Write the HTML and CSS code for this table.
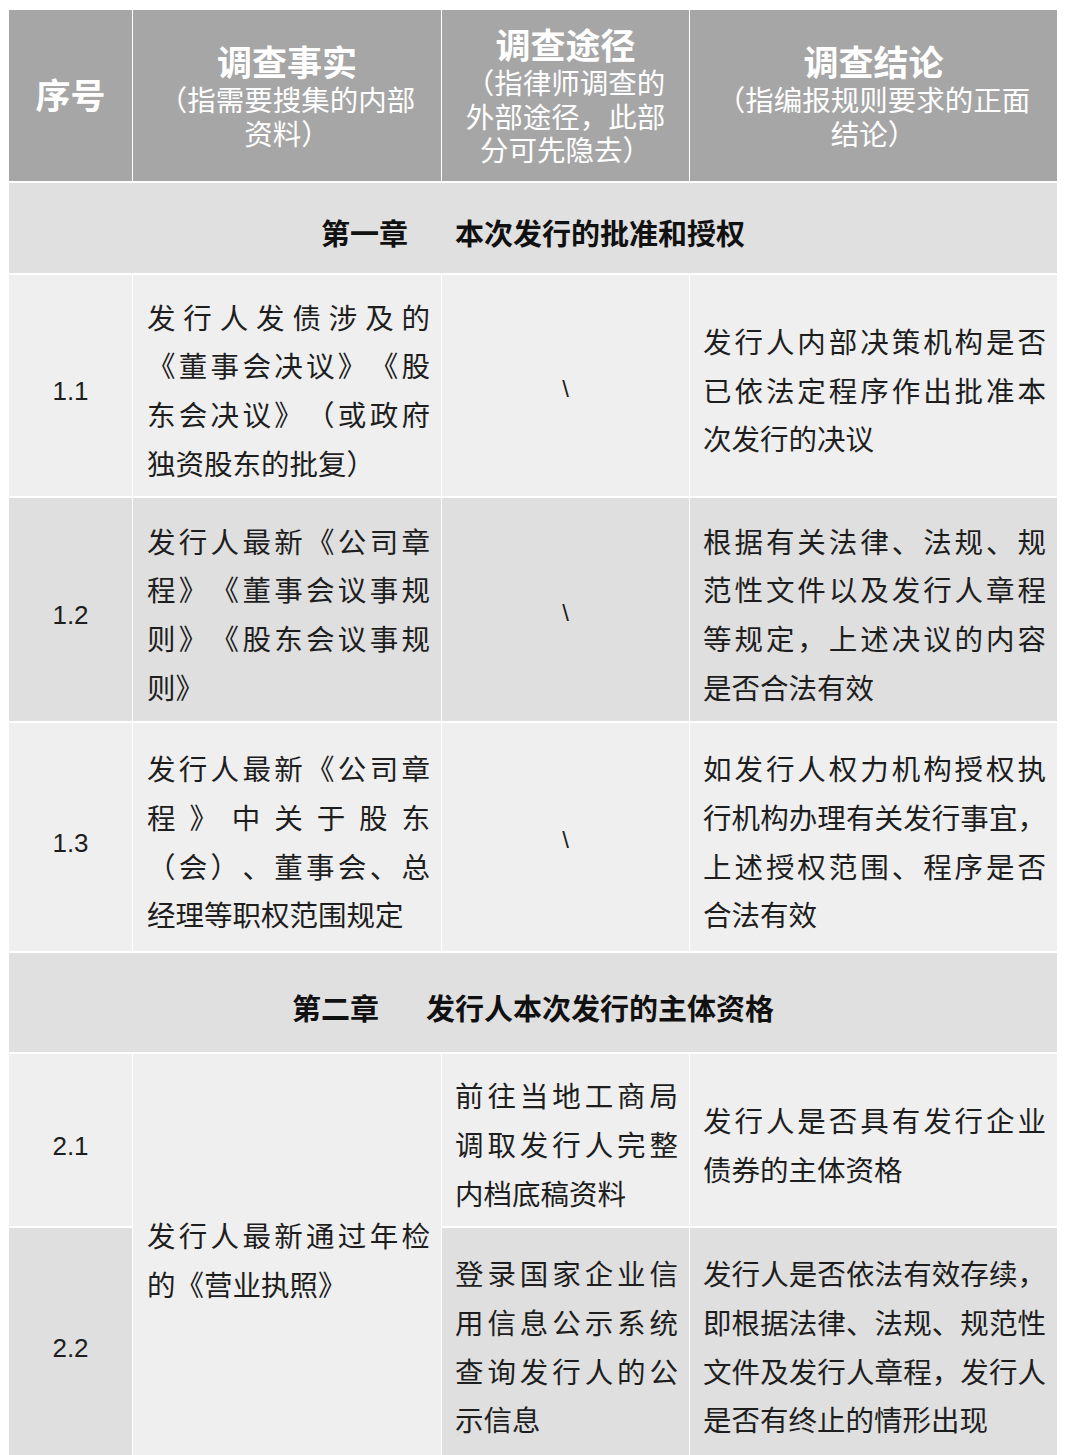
FILE: index.html
```html
<!DOCTYPE html>
<html lang="zh-CN">
<head>
<meta charset="utf-8">
<title>调查清单</title>
<link rel="stylesheet" href="styles.css">
</head>
<body>
<div class="page">
<table class="survey">
  <colgroup>
    <col class="c-no">
    <col class="c-fact">
    <col class="c-way">
    <col class="c-end">
  </colgroup>
  <thead>
    <tr class="r-head">
      <th class="h-no">序号</th>
      <th><span class="h-title">调查事实</span><span class="h-sub">（指需要搜集的内部</span><span class="h-sub">资料）</span></th>
      <th><span class="h-title">调查途径</span><span class="h-sub">（指律师调查的</span><span class="h-sub">外部途径，此部</span><span class="h-sub">分可先隐去）</span></th>
      <th><span class="h-title">调查结论</span><span class="h-sub">（指编报规则要求的正面</span><span class="h-sub">结论）</span></th>
    </tr>
  </thead>
  <tbody>
    <tr class="r-ch1">
      <td class="chapter-cell" colspan="4"><div class="chapter"><span>第一章</span><span>本次发行的批准和授权</span></div></td>
    </tr>
    <tr class="r-11 light">
      <td class="num">1.1</td>
      <td class="txt fact"><span class="ln j">发行人发债涉及的</span><span class="ln j">《董事会决议》《股</span><span class="ln j">东会决议》（或政府</span><span class="ln">独资股东的批复）</span></td>
      <td class="slash">\</td>
      <td class="txt end"><span class="ln j">发行人内部决策机构是否</span><span class="ln j">已依法定程序作出批准本</span><span class="ln">次发行的决议</span></td>
    </tr>
    <tr class="r-12 dark">
      <td class="num">1.2</td>
      <td class="txt fact"><span class="ln j">发行人最新《公司章</span><span class="ln j">程》《董事会议事规</span><span class="ln j">则》《股东会议事规</span><span class="ln">则》</span></td>
      <td class="slash">\</td>
      <td class="txt end"><span class="ln j">根据有关法律、法规、规</span><span class="ln j">范性文件以及发行人章程</span><span class="ln j">等规定，上述决议的内容</span><span class="ln">是否合法有效</span></td>
    </tr>
    <tr class="r-13 light">
      <td class="num">1.3</td>
      <td class="txt fact"><span class="ln j">发行人最新《公司章</span><span class="ln j">程》中关于股东</span><span class="ln j">（会）、董事会、总</span><span class="ln">经理等职权范围规定</span></td>
      <td class="slash">\</td>
      <td class="txt end"><span class="ln j">如发行人权力机构授权执</span><span class="ln j">行机构办理有关发行事宜，</span><span class="ln j">上述授权范围、程序是否</span><span class="ln">合法有效</span></td>
    </tr>
    <tr class="r-ch2">
      <td class="chapter-cell" colspan="4"><div class="chapter"><span>第二章</span><span>发行人本次发行的主体资格</span></div></td>
    </tr>
    <tr class="r-21 light">
      <td class="num">2.1</td>
      <td class="txt fact merged" rowspan="2"><span class="ln j">发行人最新通过年检</span><span class="ln">的《营业执照》</span></td>
      <td class="txt way"><span class="ln j">前往当地工商局</span><span class="ln j">调取发行人完整</span><span class="ln">内档底稿资料</span></td>
      <td class="txt end"><span class="ln j">发行人是否具有发行企业</span><span class="ln">债券的主体资格</span></td>
    </tr>
    <tr class="r-22 dark">
      <td class="num">2.2</td>
      <td class="txt way"><span class="ln j">登录国家企业信</span><span class="ln j">用信息公示系统</span><span class="ln j">查询发行人的公</span><span class="ln">示信息</span></td>
      <td class="txt end"><span class="ln j">发行人是否依法有效存续，</span><span class="ln j">即根据法律、法规、规范性</span><span class="ln j">文件及发行人章程，发行人</span><span class="ln">是否有终止的情形出现</span></td>
    </tr>
  </tbody>
</table>
</div>
</body>
</html>
```

FILE: styles.css
```css
html, body {
  margin: 0;
  padding: 0;
  background: #ffffff;
}

body {
  font-family: "Noto Sans CJK SC", "Noto Sans", sans-serif;
  color: #222222;
}

.page {
  padding: 8px 7px 0 8px;
}

.survey {
  border-collapse: separate;
  border-spacing: 1px 2px;
  table-layout: fixed;
  width: 1050px;
  background: #ffffff;
  text-spacing-trim: space-all;
}

.c-no { width: 123px; }
.c-fact { width: 308px; }
.c-way { width: 247px; }
.c-end { width: 367px; }

/* header */
.r-head { height: 171px; }

.r-head th {
  background: #a6a6a6;
  color: #ffffff;
  font-weight: 400;
  text-align: center;
  vertical-align: middle;
  padding: 0 4px 3px;
}

.h-no {
  font-size: 35px;
  font-weight: 700 !important;
  line-height: 44px;
}

.h-title {
  display: block;
  font-size: 35px;
  font-weight: 700;
  line-height: 43px;
}

.h-sub {
  display: block;
  font-size: 28.5px;
  line-height: 33.5px;
}

/* chapter rows */
.r-ch1 { height: 90px; }
.r-ch2 { height: 99px; }

.chapter-cell {
  background: #e0e0e0;
  padding: 8px 0 0;
  vertical-align: middle;
}

.chapter {
  display: flex;
  justify-content: center;
  gap: 47px;
  font-size: 29px;
  font-weight: 700;
  line-height: 40px;
  color: #111111;
}

/* data rows */
.r-11 { height: 221px; }
.r-12 { height: 223px; }
.r-13 { height: 228px; }
.r-21 { height: 172px; }
.r-22 { height: 228px; }

.light td { background: #efefef; }
.dark td { background: #dfdfdf; }
.survey td.merged { background: #efefef; }

td {
  vertical-align: middle;
  font-size: 28.5px;
  line-height: 48.7px;
  color: #1e1e1e;
}

.num {
  font-family: "Liberation Sans", Arial, sans-serif;
  font-size: 26px;
  line-height: 30px;
  text-align: center;
  padding: 11px 0 0;
}

.slash {
  font-family: "Liberation Sans", Arial, sans-serif;
  font-size: 24px;
  line-height: 30px;
  text-align: center;
  padding: 6px 0 0;
}

.txt {
  text-align: left;
}

.fact { padding: 9px 11px 0 14px; }
.way { padding: 9px 11px 0 13px; }
.end { padding: 9px 11px 0 13px; }

.ln {
  display: block;
  text-align: justify;
}

.ln.j {
  text-align-last: justify;
}
```
